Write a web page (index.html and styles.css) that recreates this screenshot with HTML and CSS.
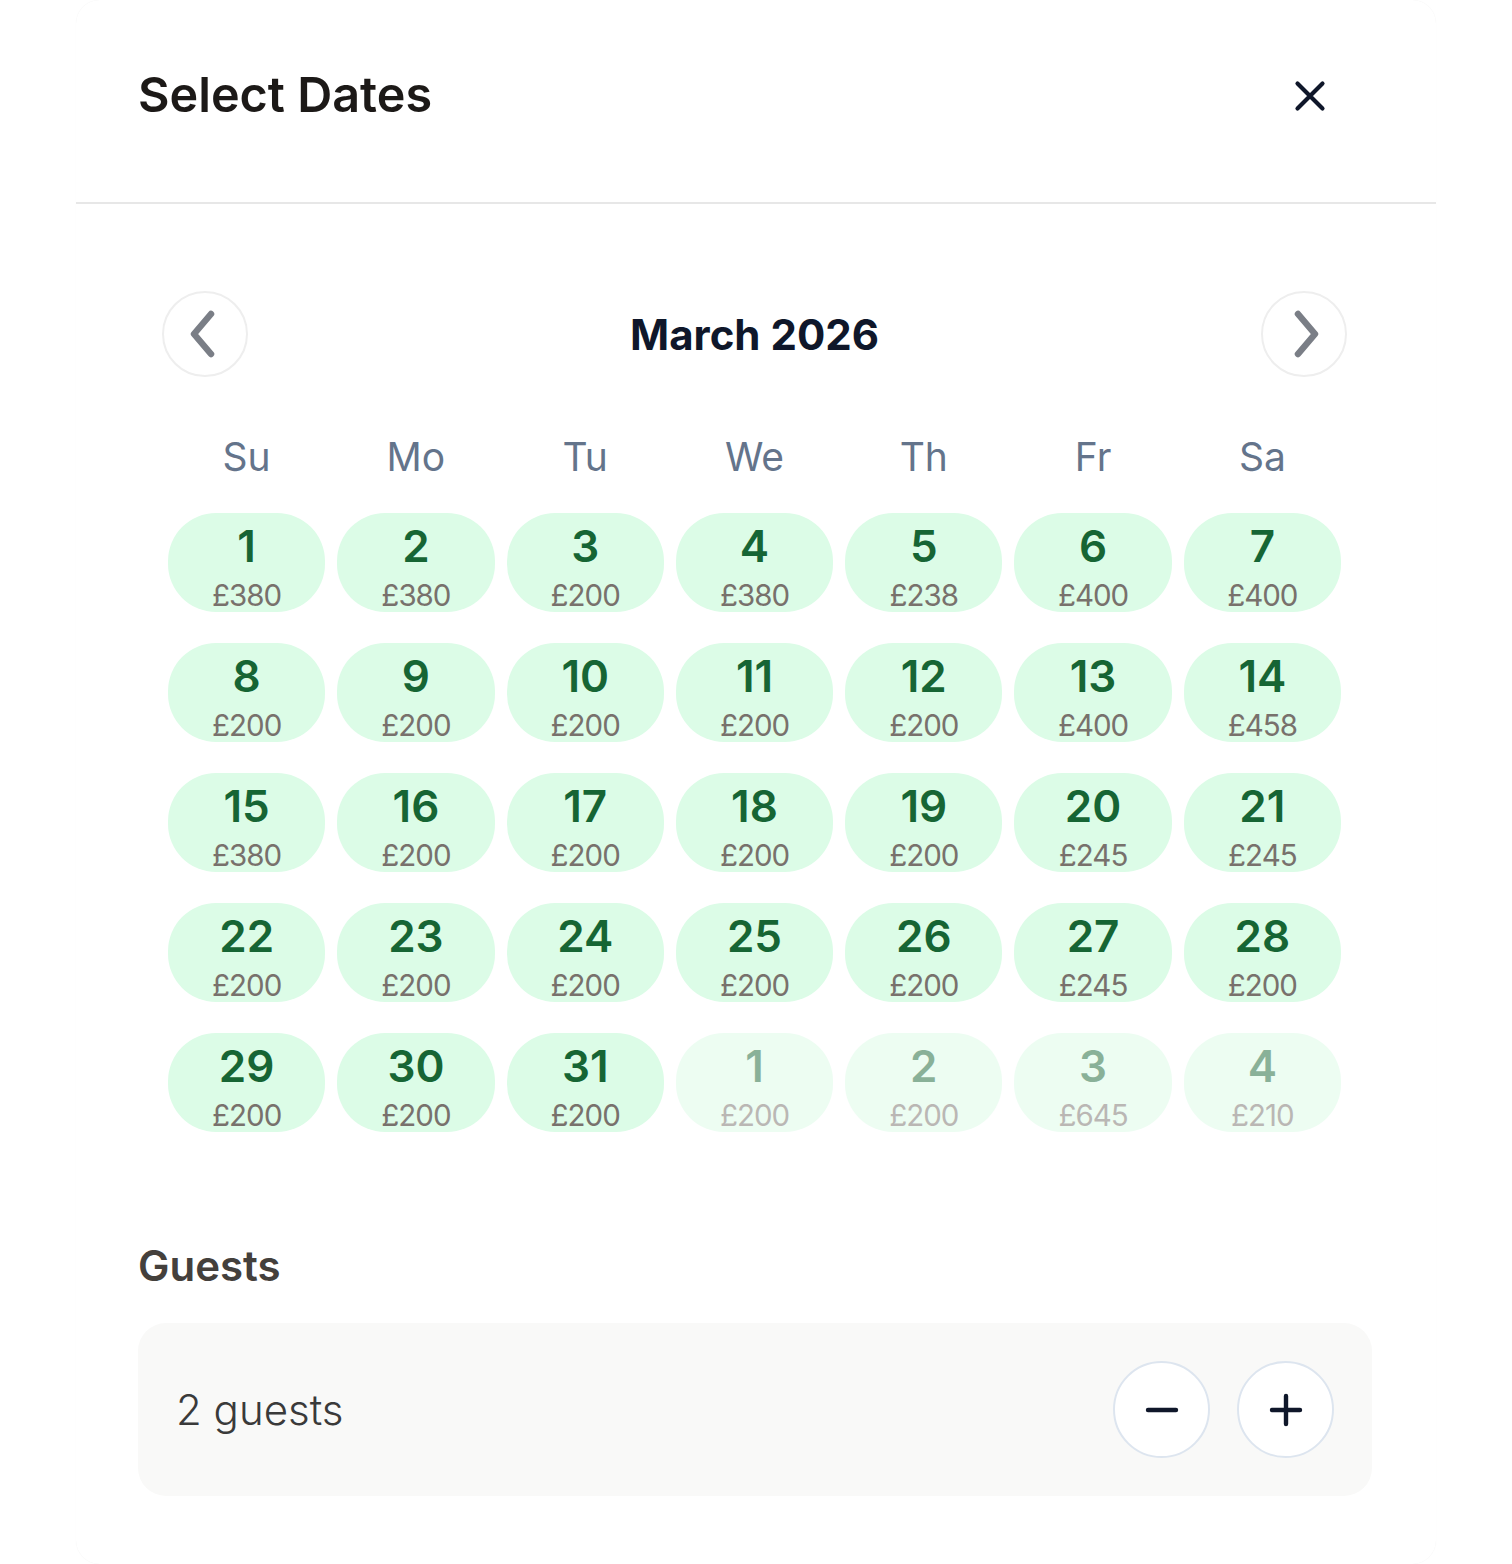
FILE: index.html
```html
<!DOCTYPE html>
<html lang="en">
<head>
    <meta charset="UTF-8">
    <meta name="viewport" content="width=device-width, initial-scale=1.0">
    <title>Select Dates</title>
    <link rel="stylesheet" href="styles.css">
</head>
<body>
    <div class="modal">
        <div class="modal-header">
            <h2 class="modal-title">Select Dates</h2>
            <button class="close-button" aria-label="Close">
                <svg width="50" height="50" viewBox="0 0 24 24" fill="none" stroke="currentColor" stroke-width="2" stroke-linecap="round" stroke-linejoin="round"><path d="M18 6 6 18M6 6l12 12"/></svg>
            </button>
        </div>

        <div class="calendar">
            <div class="calendar-nav">
                <button class="nav-button" aria-label="Previous month">
                    <svg width="30" height="50" viewBox="0 0 30 50" fill="none" stroke="currentColor" stroke-width="6.5" stroke-linecap="round" stroke-linejoin="round"><path d="M21 5 4 25l17 20"/></svg>
                </button>
                <div class="month-label">March 2026</div>
                <button class="nav-button" aria-label="Next month">
                    <svg width="30" height="50" viewBox="0 0 30 50" fill="none" stroke="currentColor" stroke-width="6.5" stroke-linecap="round" stroke-linejoin="round"><path d="M9 5l17 20L9 45"/></svg>
                </button>
            </div>

            <div class="weekdays">
                <div>Su</div><div>Mo</div><div>Tu</div><div>We</div><div>Th</div><div>Fr</div><div>Sa</div>
            </div>

            <div class="days">
                <div class="day"><span class="day-num">1</span><span class="day-price">£380</span></div>
                <div class="day"><span class="day-num">2</span><span class="day-price">£380</span></div>
                <div class="day"><span class="day-num">3</span><span class="day-price">£200</span></div>
                <div class="day"><span class="day-num">4</span><span class="day-price">£380</span></div>
                <div class="day"><span class="day-num">5</span><span class="day-price">£238</span></div>
                <div class="day"><span class="day-num">6</span><span class="day-price">£400</span></div>
                <div class="day"><span class="day-num">7</span><span class="day-price">£400</span></div>

                <div class="day"><span class="day-num">8</span><span class="day-price">£200</span></div>
                <div class="day"><span class="day-num">9</span><span class="day-price">£200</span></div>
                <div class="day"><span class="day-num">10</span><span class="day-price">£200</span></div>
                <div class="day"><span class="day-num">11</span><span class="day-price">£200</span></div>
                <div class="day"><span class="day-num">12</span><span class="day-price">£200</span></div>
                <div class="day"><span class="day-num">13</span><span class="day-price">£400</span></div>
                <div class="day"><span class="day-num">14</span><span class="day-price">£458</span></div>

                <div class="day"><span class="day-num">15</span><span class="day-price">£380</span></div>
                <div class="day"><span class="day-num">16</span><span class="day-price">£200</span></div>
                <div class="day"><span class="day-num">17</span><span class="day-price">£200</span></div>
                <div class="day"><span class="day-num">18</span><span class="day-price">£200</span></div>
                <div class="day"><span class="day-num">19</span><span class="day-price">£200</span></div>
                <div class="day"><span class="day-num">20</span><span class="day-price">£245</span></div>
                <div class="day"><span class="day-num">21</span><span class="day-price">£245</span></div>

                <div class="day"><span class="day-num">22</span><span class="day-price">£200</span></div>
                <div class="day"><span class="day-num">23</span><span class="day-price">£200</span></div>
                <div class="day"><span class="day-num">24</span><span class="day-price">£200</span></div>
                <div class="day"><span class="day-num">25</span><span class="day-price">£200</span></div>
                <div class="day"><span class="day-num">26</span><span class="day-price">£200</span></div>
                <div class="day"><span class="day-num">27</span><span class="day-price">£245</span></div>
                <div class="day"><span class="day-num">28</span><span class="day-price">£200</span></div>

                <div class="day"><span class="day-num">29</span><span class="day-price">£200</span></div>
                <div class="day"><span class="day-num">30</span><span class="day-price">£200</span></div>
                <div class="day"><span class="day-num">31</span><span class="day-price">£200</span></div>
                <div class="day outside"><span class="day-num">1</span><span class="day-price">£200</span></div>
                <div class="day outside"><span class="day-num">2</span><span class="day-price">£200</span></div>
                <div class="day outside"><span class="day-num">3</span><span class="day-price">£645</span></div>
                <div class="day outside"><span class="day-num">4</span><span class="day-price">£210</span></div>
            </div>
        </div>

        <div class="guests">
            <h3 class="guests-title">Guests</h3>
            <div class="guests-box">
                <span class="guests-count">2 guests</span>
                <div class="stepper">
                    <button class="step-button" aria-label="Remove guest">
                        <svg width="48" height="48" viewBox="0 0 24 24" fill="none" stroke="currentColor" stroke-width="2.2" stroke-linecap="round"><path d="M5 12h14"/></svg>
                    </button>
                    <button class="step-button" aria-label="Add guest">
                        <svg width="48" height="48" viewBox="0 0 24 24" fill="none" stroke="currentColor" stroke-width="2.2" stroke-linecap="round"><path d="M5 12h14M12 5v14"/></svg>
                    </button>
                </div>
            </div>
        </div>
    </div>
</body>
</html>
```

FILE: styles.css
```css
* {
    box-sizing: border-box;
}

body {
    margin: 0;
    background: #fff;
    font-family: Inter, 'Noto Sans', sans-serif;
}

button {
    font: inherit;
    cursor: pointer;
}

.modal {
    width: 1360px;
    margin: 0 auto;
    background: #fff;
    border-radius: 24px;
    box-shadow: 0 0 1px rgba(0, 0, 0, 0.07);
    padding-bottom: 68px;
}

/* header */
.modal-header {
    height: 204px;
    display: flex;
    align-items: center;
    justify-content: space-between;
    padding: 0 101px 11px 62px;
    border-bottom: 2px solid #e7e7e7;
}

.modal-title {
    margin: 0;
    font-size: 48.5px;
    font-weight: 600;
    color: #1c1917;
    line-height: 1.2;
}

.close-button {
    width: 50px;
    height: 50px;
    padding: 0;
    border: none;
    background: none;
    color: #0f172a;
    display: flex;
}

/* calendar */
.calendar {
    padding: 87px 89px 0 86px;
}

.calendar-nav {
    display: flex;
    align-items: center;
    justify-content: space-between;
}

.nav-button {
    width: 86px;
    height: 86px;
    border-radius: 50%;
    border: 2px solid #eeeeee;
    background: #fff;
    color: #7a7e86;
    display: flex;
    align-items: center;
    justify-content: center;
    padding: 0;
}

.month-label {
    font-size: 42px;
    font-weight: 700;
    color: #0f172a;
}

.weekdays {
    display: grid;
    grid-template-columns: repeat(7, 1fr);
    margin-top: 56px;
    text-align: center;
    font-size: 39px;
    line-height: 48px;
    color: #64748b;
}

.days {
    display: grid;
    grid-template-columns: repeat(7, 1fr);
    row-gap: 31px;
    margin-top: 32px;
}

.day {
    height: 99px;
    margin: 0 6px;
    border-radius: 48px;
    background: #dcfce7;
    display: flex;
    flex-direction: column;
    align-items: center;
    padding-top: 11px;
}

.day-num {
    font-size: 44px;
    line-height: 1;
    font-weight: 600;
    color: #166534;
}

.day-price {
    margin-top: 13px;
    font-size: 29.5px;
    line-height: 1;
    letter-spacing: -1px;
    color: #78716c;
}

.day.outside {
    opacity: 0.5;
}

/* guests */
.guests {
    padding: 108px 64px 0 62px;
}

.guests-title {
    margin: 0;
    font-size: 42px;
    line-height: 52px;
    font-weight: 600;
    color: #44403c;
}

.guests-box {
    margin-top: 31px;
    height: 173px;
    padding: 0 38px;
    border-radius: 28px;
    background: #f9f9f8;
    display: flex;
    align-items: center;
    justify-content: space-between;
}

.guests-count {
    font-size: 42px;
    font-weight: 300;
    color: #3a3a3a;
}

.stepper {
    display: flex;
    gap: 27px;
}

.step-button {
    width: 97px;
    height: 97px;
    border-radius: 50%;
    border: 2px solid #dde5ef;
    background: #fff;
    color: #0f172a;
    display: flex;
    align-items: center;
    justify-content: center;
    padding: 0;
}
```
